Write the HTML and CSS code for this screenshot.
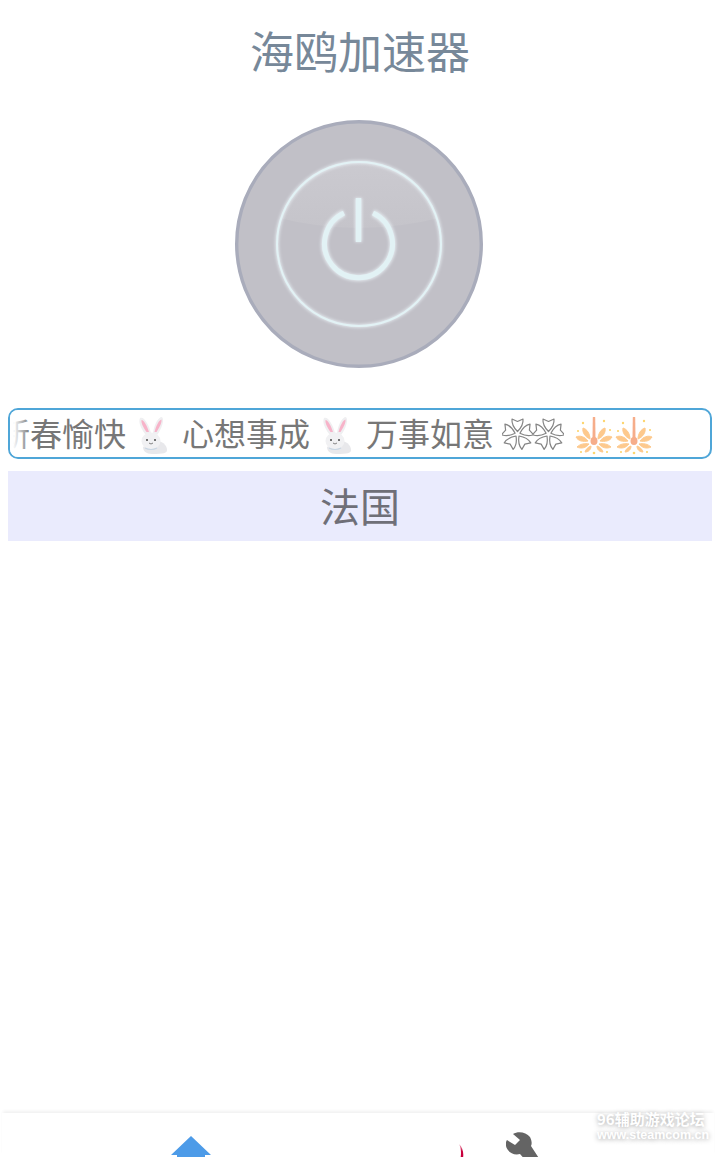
FILE: index.html
```html
<!DOCTYPE html>
<html>
<head>
    <meta charset="UTF-8" />
    <title>海鸥加速器</title>

    <link rel="stylesheet" href="styles.css">
</head>
<body>
    <div class="page">
        <h1 class="title">海鸥加速器</h1>

        <div class="power">
            <svg width="250" height="250" viewBox="0 0 250 250">
                <defs>
                    <clipPath id="ring-clip"><circle cx="125" cy="125" r="82" /></clipPath>
                    <linearGradient id="shine" x1="0" y1="0" x2="0" y2="1">
                        <stop offset="0" stop-color="#cccbd1" />
                        <stop offset="1" stop-color="#c5c4ca" />
                    </linearGradient>
                    <filter id="glow" x="-20%" y="-20%" width="140%" height="140%">
                        <feGaussianBlur stdDeviation="1.500" />
                    </filter>
                </defs>
                <circle cx="125" cy="125" r="122.300" fill="#c1c0c7" stroke="#a9acbb" stroke-width="3.400" />
                <path d="M30 95 Q125 123 220 95 L220 30 L30 30 Z" fill="url(#shine)" clip-path="url(#ring-clip)" />
                <g fill="none" stroke="#f2fbff" stroke-opacity="0.7" filter="url(#glow)">
                    <circle cx="125" cy="125" r="82" stroke-width="3.500" />
                    <path d="M110 94 A34 34 0 1 0 139 94" stroke-width="7" />
                    <path d="M124.500 79 V123" stroke-width="7" />
                </g>
                <g fill="none" stroke="#e2f2f5">
                    <circle cx="125" cy="125" r="82" stroke-width="2" />
                    <path d="M110 94 A34 34 0 1 0 139 94" stroke-width="5" />
                    <path d="M124.500 79 V123" stroke-width="5.500" />
                </g>
            </svg>
        </div>

        <div class="notice">
            <div class="notice-track">
                <span class="notice-text">新春愉快</span>
                <svg class="emoji" width="36" height="38" viewBox="0 0 36 38"><use href="#rabbit-icon" /></svg>
                <span class="notice-text">心想事成</span>
                <svg class="emoji" width="36" height="38" viewBox="0 0 36 38"><use href="#rabbit-icon" /></svg>
                <span class="notice-text">万事如意</span>
                <div class="flowers">
                    <svg width="31" height="34" viewBox="-15.500 -17 31 34"><use href="#flower-icon" /></svg>
                    <svg width="31" height="34" viewBox="-15.500 -17 31 34"><use href="#flower-icon" /></svg>
                </div>
                <div class="fireworks">
                    <svg class="emoji" width="38" height="38" viewBox="-19 -19 38 38"><use href="#firework-icon" /></svg>
                    <svg class="emoji" width="38" height="38" viewBox="-19 -19 38 38"><use href="#firework-icon" /></svg>
                </div>
            </div>
        </div>

        <div class="region">法国</div>

        <div class="spacer"></div>

        <nav class="tabs">
            <svg class="tab-home" width="40" height="40" viewBox="0 0 40 40">
                <path d="M20 0 L40 19 H34 V40 H6 V19 H0 Z" fill="#4d9be8" />
            </svg>
            <svg class="tab-red" width="30" height="30" viewBox="0 0 30 30">
                <defs>
                    <linearGradient id="red-fade" x1="0" y1="0" x2="0" y2="1">
                        <stop offset="0" stop-color="#f3c4d0" />
                        <stop offset="0.5" stop-color="#c8003c" />
                    </linearGradient>
                </defs>
                <path d="M1 0 C4.500 3 6 9 5 14 L2.500 14 C3.500 9 3 4 1 0 Z" fill="url(#red-fade)" />
            </svg>
            <svg class="tab-tool" width="40" height="40" viewBox="0 0 40 40">
                <path d="M7 2 L14 8 L9 13 L1 8 C0 9 -.5 12 0 14 C1 19 7 24 14 22 L30 40 L40 37 L25 14 C26 12 26 9 24 5 C20 0 12 -1 7 2 Z" fill="#646464" />
            </svg>
        </nav>

        <div class="watermark">
            <div class="watermark-cn">96辅助游戏论坛</div>
            <div class="watermark-url">www.steamcom.cn</div>
        </div>
    </div>

    <svg class="icon-defs" width="0" height="0">
        <defs>
            <g id="rabbit-icon">
                <path d="M10 18 C5 12 2 5 4 1 C8 -1 13 8 15 16 Z" fill="#efeff1" />
                <path d="M10.500 15 C7 10 5 6 5.500 3 C8 3 11 9 13 15 Z" fill="#f7b3c9" />
                <path d="M17 16 C18 8 22 0 26 0 C29 3 25 13 21 18 Z" fill="#efeff1" />
                <path d="M18.500 15 C20 9 23 3 25.500 2.500 C26 6 23 11 20.500 15 Z" fill="#f7b3c9" />
                <path d="M18 24 C24 23 31 27 31 33 C31 36 28 37 16 37 C10 37 7 34 7 30 Z" fill="#e8e8eb" />
                <ellipse cx="15" cy="24" rx="9.500" ry="8.500" fill="#f1f1f3" />
                <circle cx="11" cy="23" r="1.100" fill="#555" />
                <circle cx="19" cy="23" r="1.100" fill="#555" />
                <path d="M13 26 Q15 28 17 26" fill="none" stroke="#666" stroke-width=".8" />
                <path d="M9 31 Q15 34 21 31" fill="none" stroke="#c9d6e3" stroke-width="1.200" />
            </g>
            <g id="flower-icon" fill="#fff" stroke="#858585" stroke-width="1.200" stroke-linejoin="round">
                <path id="petal" d="M0 -2.500 C-3.500 -6 -6 -10 -5.500 -15 L0 -12.500 L5.500 -15 C6 -10 3.500 -6 0 -2.500 Z" />
                <use href="#petal" transform="rotate(72)" />
                <use href="#petal" transform="rotate(144)" />
                <use href="#petal" transform="rotate(216)" />
                <use href="#petal" transform="rotate(288)" />
            </g>
            <g id="firework-icon">
                <path d="M-1.200 -19 H1.200 L1.500 2 H-1.500 Z" fill="#f6ad8a" />
                <ellipse cx="0" cy="5" rx="3.500" ry="4" fill="#f6ad8a" />
                <g fill="#fdc98d" stroke="#fdc98d" stroke-width="1" stroke-linejoin="round">
                    <path d="M-4 3 C-4 -2 -7 -7 -11 -8 C-12 -4 -9 1 -4 3 Z" />
                    <path d="M4 3 C4 -2 7 -7 11 -8 C12 -4 9 1 4 3 Z" />
                    <path d="M-6 5 C-9 1 -14 -1 -18 1 C-16 5 -11 6 -6 5 Z" />
                    <path d="M6 5 C9 1 14 -1 18 1 C16 5 11 6 6 5 Z" />
                    <path d="M-5 8 C-9 7 -14 8 -17 11 C-13 13 -8 12 -5 8 Z" />
                    <path d="M5 8 C9 7 14 8 17 11 C13 13 8 12 5 8 Z" />
                    <path d="M-3 10 C-6 11 -8 13 -9 16 C-6 16 -3 14 -3 10 Z" />
                    <path d="M3 10 C6 11 8 13 9 16 C6 16 3 14 3 10 Z" />
                </g>
                <g fill="#fdd56f">
                    <circle cx="-11" cy="-13" r="1.200" />
                    <circle cx="10" cy="-15" r="1.200" />
                    <circle cx="-16" cy="-5" r="1.100" />
                    <circle cx="16" cy="-6" r="1.100" />
                    <circle cx="0" cy="17" r="1.300" />
                    <circle cx="-13" cy="16" r="1.100" />
                    <circle cx="13" cy="16" r="1.100" />
                </g>
            </g>
        </defs>
    </svg>
</body>
</html>
```

FILE: styles.css
```css
body {
    margin: 0;
    font-family: "Noto Sans CJK SC", "Liberation Sans", sans-serif;
    background-color: #ffffff;
}

.page {
    position: relative;
    display: flex;
    flex-direction: column;
    height: 1157px;
    overflow: hidden;
}

.title {
    margin: 0 0 4px 4px;
    height: 100px;
    line-height: 100px;
    font-size: 44px;
    font-weight: 400;
    text-align: center;
    color: #778899;
}

.power {
    display: flex;
    justify-content: center;
    height: 304px;
    padding-top: 15px;
    box-sizing: border-box;
    margin-left: 2px;
}

.notice {
    position: relative;
    height: 51px;
    margin: 0 4px 12px 8px;
    box-sizing: border-box;
    border: 2px solid #4fa6d8;
    border-radius: 10px;
    overflow: hidden;
}

.notice::before {
    content: "";
    position: absolute;
    left: 0;
    top: 0;
    bottom: 0;
    width: 20px;
    background: linear-gradient(to right, #ffffff 15%, rgba(255, 255, 255, 0));
}

.notice-track {
    display: flex;
    align-items: center;
    gap: 10px;
    height: 47px;
    margin-left: -12px;
    font-size: 32px;
    white-space: nowrap;
    color: #777777;
}

.notice-text {
    padding-bottom: 4px;
}

.emoji {
    margin-top: 5px;
}

.flowers {
    display: flex;
    margin-left: -2px;
}

.fireworks {
    display: flex;
    gap: 2px;
    margin-left: 1px;
}

.region {
    height: 68px;
    line-height: 68px;
    padding-bottom: 2px;
    margin: 0 4px 0 8px;
    font-size: 40px;
    text-align: center;
    color: #6f6f78;
    background-color: #eaebfd;
}

.spacer {
    flex: 1;
}

.tabs {
    display: flex;
    align-items: flex-start;
    height: 44px;
    margin: 0 2px;
    box-shadow: 0 -3px 3px -1px rgba(0, 0, 0, 0.06);
    background-color: #ffffff;
}

.tab-home {
    margin: 23px 0 0 169px;
}

.tab-red {
    margin: 31px 0 0 247px;
}

.tab-tool {
    margin: 19px 0 0 18px;
}

.watermark {
    position: absolute;
    left: 597px;
    bottom: 13px;
    font-weight: 700;
    color: #ffffff;
    text-shadow: 0 1px 5px rgba(0, 0, 0, 0.35);
}

.watermark-cn {
    font-size: 15px;
    line-height: 17px;
}

.watermark-url {
    font-family: "Liberation Sans", sans-serif;
    font-size: 12.500px;
    line-height: 17px;
}

.icon-defs {
    position: absolute;
}
```
